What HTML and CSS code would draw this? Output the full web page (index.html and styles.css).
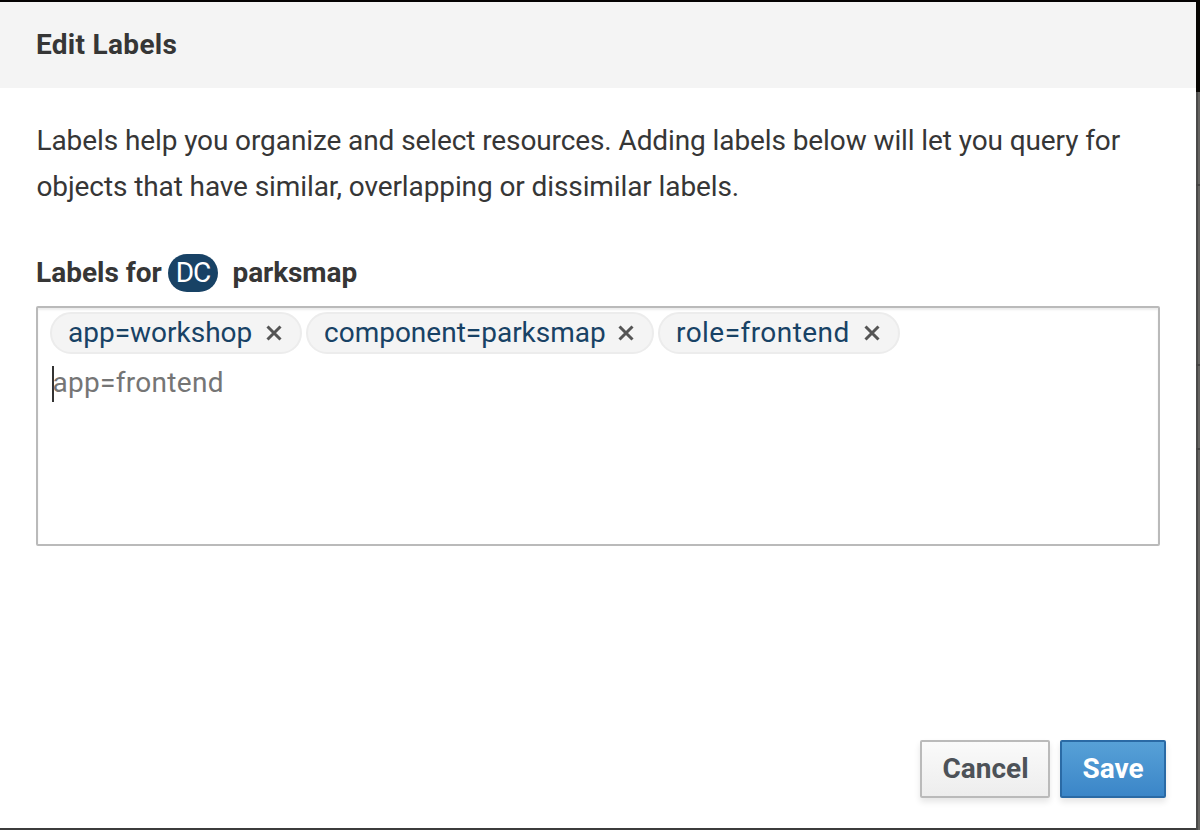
FILE: index.html
```html
<!DOCTYPE html>
<html lang="en">
<head>
<meta charset="utf-8">
<title>Edit Labels</title>
<link rel="stylesheet" href="styles.css">
</head>
<body>
<div class="page">
  <div class="modal">
    <header class="modal-header"><h1 class="title">Edit Labels</h1></header>
    <main class="modal-body">
      <p class="intro">Labels help you organize and select resources. Adding labels below will let you query for<br>objects that have similar, overlapping or dissimilar labels.</p>
      <div class="field-label"><span>Labels for</span><span class="badge">DC</span><span class="resource">parksmap</span></div>
      <div class="tags-input">
        <div class="tags">
          <span class="tag"><span>app=workshop</span><svg class="close" viewBox="0 0 16 16"><path d="M1.5 1.5 14.5 14.5M14.5 1.5 1.5 14.5"/></svg></span>
          <span class="tag tag-component"><span>component=parksmap</span><svg class="close" viewBox="0 0 16 16"><path d="M1.5 1.5 14.5 14.5M14.5 1.5 1.5 14.5"/></svg></span>
          <span class="tag tag-role"><span>role=frontend</span><svg class="close" viewBox="0 0 16 16"><path d="M1.5 1.5 14.5 14.5M14.5 1.5 1.5 14.5"/></svg></span>
        </div>
        <div class="entry"><span class="caret"></span><span class="placeholder">app=frontend</span></div>
      </div>
    </main>
    <footer class="modal-footer">
      <button class="btn cancel">Cancel</button>
      <button class="btn save">Save</button>
    </footer>
  </div>
  <div class="backdrop"><div class="masthead"></div><div class="row row-first"></div><div class="row row-second"></div><div class="row row-third"></div><div class="rest"></div></div>
</div>
</body>
</html>
```
FILE: styles.css
```css
* { box-sizing: border-box; }
body { margin: 0; background: #fff; color: #363636; font: 400 28px/46px Roboto, "Open Sans", sans-serif; }
.page { display: grid; grid-template-columns: 1196px 4px; height: 830px; overflow: hidden; }
.modal { display: flex; flex-direction: column; height: 830px; border-top: 2px solid #050303; border-bottom: 2px solid #3c3c3c; background: #fff; }
.modal-header { height: 86px; padding: 20px 36px; background: #f4f4f4; }
.title { margin: 0; font-size: 28px; line-height: 46px; font-weight: 700; letter-spacing: .3px; }
.modal-body { padding: 30px 36px 0; }
.intro { margin: 0; padding-left: .5px; letter-spacing: -.1px; white-space: nowrap; }
.field-label { display: flex; align-items: center; height: 38px; margin-top: 44px; font-weight: 700; }
.badge { display: flex; align-items: center; justify-content: center; width: 50px; height: 38px; margin: 0 14.5px 0 6.2px; border-radius: 19px; background: #184265; color: #fff; font-weight: 400; letter-spacing: -1px; }
.resource { letter-spacing: -.1px; }
.tags-input { height: 240px; margin-top: 14px; padding: 4px 12px; border: 2px solid #bababa; border-radius: 2px; box-shadow: inset 0 2px 2px rgba(3,3,3,.075); }
.tags { display: flex; gap: 4px; }
.tag { display: flex; align-items: center; width: 252px; height: 42px; padding-left: 16px; border: 2px solid #ececec; border-radius: 21px; background: #f4f4f4; color: #184265; }
.tag-component { width: 348px; }
.tag-role { width: 242px; letter-spacing: .45px; }
.close { width: 16px; height: 16px; margin-left: auto; margin-right: 18px; fill: none; stroke: #555; stroke-width: 3; }
.entry { display: flex; align-items: center; height: 36px; margin-top: 12px; padding-left: 2px; color: #757575; }
.caret { width: 2px; height: 36px; background: #333; }
.placeholder { margin: -2px 0 0 -1.5px; letter-spacing: .3px; }
.modal-footer { display: flex; gap: 10px; justify-content: flex-end; margin-top: auto; padding: 0 30px 30px 0; }
.btn { height: 58px; padding: 0; border: 2px solid #bababa; border-radius: 2px; font: 700 28px/46px Roboto, "Open Sans", sans-serif; box-shadow: 0 4px 6px rgba(3,3,3,.1); }
.cancel { width: 130px; padding-left: 1px; color: #4d5258; background: linear-gradient(#fafafa, #ededed); }
.save { width: 106px; color: #fff; border-color: #2a6aa5; background: linear-gradient(#57a1d7, #3b86c8); }
.backdrop { display: flex; flex-direction: column; }
.masthead { height: 92px; background: #080603; }
.row, .rest { border-left: 2px solid #4a4a49; background: #656461; }
.row { display: flex; flex-direction: column; justify-content: flex-end; }
.row::after { content: ""; height: 2px; margin-left: -2px; background: #454443; }
.row-first { height: 94px; }
.row-second { height: 180px; }
.row-third { height: 84px; }
.rest { flex: 1; }
```
